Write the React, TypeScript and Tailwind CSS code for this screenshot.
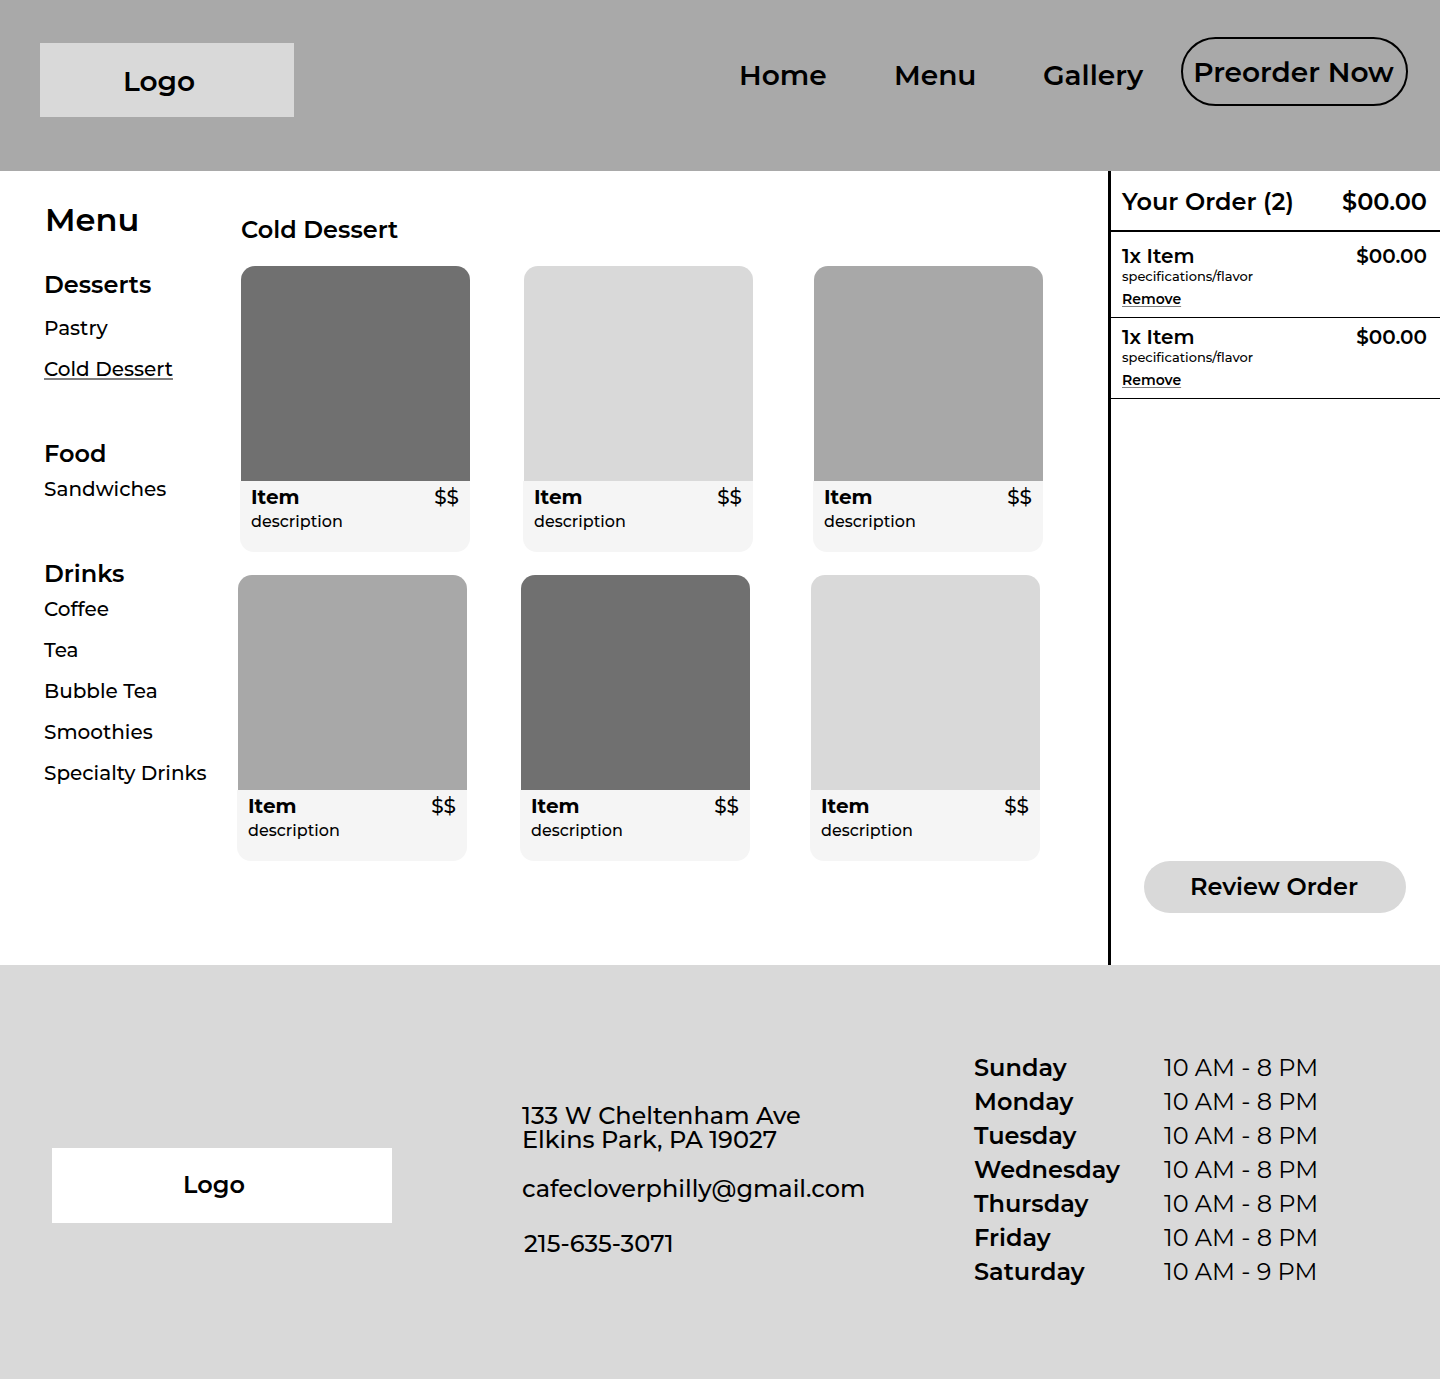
type CardTone = "dark" | "light" | "mid";

const toneClass: Record<CardTone, string> = {
  dark: "bg-[#707070]",
  light: "bg-[#d9d9d9]",
  mid: "bg-[#a8a8a8]",
};

const categories = [
  { title: "Desserts", items: ["Pastry", "Cold Dessert"], listClass: "mt-4" },
  { title: "Food", items: ["Sandwiches"], listClass: "mt-2" },
  {
    title: "Drinks",
    items: ["Coffee", "Tea", "Bubble Tea", "Smoothies", "Specialty Drinks"],
    listClass: "mt-2",
  },
];

const hours = [
  ["Sunday", "10 AM - 8 PM"],
  ["Monday", "10 AM - 8 PM"],
  ["Tuesday", "10 AM - 8 PM"],
  ["Wednesday", "10 AM - 8 PM"],
  ["Thursday", "10 AM - 8 PM"],
  ["Friday", "10 AM - 8 PM"],
  ["Saturday", "10 AM - 9 PM"],
];

function Header() {
  return (
    <header className="flex items-start justify-between bg-[#a9a9a9] pt-[37px] pr-8 pb-[54px] pl-10">
      <a
        href="#"
        className="mt-1.5 flex h-[74px] w-[254px] items-center justify-center bg-[#d9d9d9] pt-0.5 pr-4 text-[28px] font-semibold"
      >
        Logo
      </a>
      <nav className="flex items-start text-[28px] leading-[68px] font-semibold">
        <a href="#home" className="mt-1 w-[155px]">
          Home
        </a>
        <a href="#menu" className="mt-1 w-[149px]">
          Menu
        </a>
        <a href="#gallery" className="mt-1 w-[138px]">
          Gallery
        </a>
        <button
          type="button"
          className="h-[69px] w-[227px] rounded-full border-2 border-black pr-0.5 leading-[64px] font-semibold whitespace-nowrap"
        >
          Preorder Now
        </button>
      </nav>
    </header>
  );
}

function Sidebar() {
  return (
    <nav aria-label="Menu categories" className="w-[193px] shrink-0 pt-[29px]">
      <h1 className="mb-[30px] pl-px text-[32px] leading-10 font-semibold">Menu</h1>
      <div className="flex flex-col gap-[58px]">
        {categories.map((c) => (
          <section key={c.title}>
            <h2 className="text-2xl leading-[30px] font-semibold">{c.title}</h2>
            <ul
              className={`flex flex-col gap-[17px] text-xl leading-6 font-medium whitespace-nowrap ${c.listClass}`}
            >
              {c.items.map((item) => (
                <li key={item} className="h-6">
                  <a
                    href="#"
                    className={
                      item === "Cold Dessert"
                        ? "underline decoration-[#808080] decoration-2 underline-offset-2"
                        : ""
                    }
                  >
                    {item}
                  </a>
                </li>
              ))}
            </ul>
          </section>
        ))}
      </div>
    </nav>
  );
}

function Card({ tone }: { tone: CardTone }) {
  return (
    <li className="w-[230px]">
      <div className={`ml-px h-[215px] rounded-t-[14px] ${toneClass[tone]}`} />
      <div className="h-[71px] rounded-b-[14px] bg-[#f5f5f5] pt-1 pr-[11px] pl-[11px]">
        <div className="flex justify-between text-xl leading-[25px]">
          <h3 className="font-bold">Item</h3>
          <span className="font-medium">$$</span>
        </div>
        <p className="text-base leading-6 font-medium">description</p>
      </div>
    </li>
  );
}

function CardRow({ tones, className }: { tones: CardTone[]; className: string }) {
  return (
    <ul className={`grid grid-cols-[283fr_290fr_230fr] ${className}`}>
      {tones.map((tone) => (
        <Card key={tone} tone={tone} />
      ))}
    </ul>
  );
}

function OrderItem({ className }: { className: string }) {
  return (
    <li className={`border-b border-black pr-[13px] pb-[9px] pl-[11px] ${className}`}>
      <div className="flex justify-between text-xl leading-6 font-semibold">
        <span>1x Item</span>
        <span>$00.00</span>
      </div>
      <p className="text-[13px] leading-[17px] font-medium">specifications/flavor</p>
      <button
        type="button"
        className="mt-[5px] block text-[14px] leading-[18px] font-semibold underline decoration-[#808080] underline-offset-2"
      >
        Remove
      </button>
    </li>
  );
}

function Order() {
  return (
    <aside className="flex w-[332px] shrink-0 flex-col border-l-[3px] border-black">
      <div className="flex h-[61px] items-center justify-between border-b-2 border-black pt-0.5 pr-[13px] pl-[11px] text-2xl font-semibold">
        <h2>Your Order (2)</h2>
        <span>$00.00</span>
      </div>
      <ul>
        <OrderItem className="pt-3" />
        <OrderItem className="pt-[7px]" />
      </ul>
      <button
        type="button"
        className="mt-auto mr-[34px] mb-[52px] ml-[33px] h-[52px] rounded-full bg-[#d9d9d9] pr-0.5 text-2xl font-semibold"
      >
        Review Order
      </button>
    </aside>
  );
}

function Footer() {
  return (
    <footer className="flex min-h-[414px] items-start bg-[#d9d9d9] pt-[86px] pb-[90px] pl-[52px]">
      <a
        href="#"
        className="mt-[97px] mr-[130px] flex h-[75px] w-[340px] shrink-0 items-center justify-center bg-white pr-4 pb-0.5 text-2xl font-semibold"
      >
        Logo
      </a>
      <address className="mt-[53px] flex-1 text-2xl leading-6 font-medium whitespace-nowrap not-italic">
        <p>133 W Cheltenham Ave</p>
        <p>Elkins Park, PA 19027</p>
        <a href="mailto:cafecloverphilly@gmail.com" className="mt-[25px] block">
          cafecloverphilly@gmail.com
        </a>
        <a href="tel:215-635-3071" className="mt-[31px] block pl-0.5">
          215-635-3071
        </a>
      </address>
      <table className="mr-[120px] text-2xl leading-[34px] whitespace-nowrap">
        <tbody>
          {hours.map(([day, time]) => (
            <tr key={day}>
              <th scope="row" className="w-[190px] p-0 text-left font-semibold">
                {day}
              </th>
              <td className="w-[156px] p-0">{time}</td>
            </tr>
          ))}
        </tbody>
      </table>
    </footer>
  );
}

export default function App() {
  return (
    <div className="bg-white font-[Montserrat,Inter,sans-serif] text-black">
      <Header />
      <div className="flex min-h-[794px]">
        <main className="flex flex-1 pl-11">
          <Sidebar />
          <section className="flex-1 pt-11 pr-[65px] pb-[104px]">
            <h2 className="mb-[21px] ml-1 text-2xl leading-[30px] font-semibold">Cold Dessert</h2>
            <CardRow tones={["dark", "light", "mid"]} className="pl-[3px]" />
            <CardRow tones={["mid", "dark", "light"]} className="mt-[23px] pr-[3px]" />
          </section>
        </main>
        <Order />
      </div>
      <Footer />
    </div>
  );
}
